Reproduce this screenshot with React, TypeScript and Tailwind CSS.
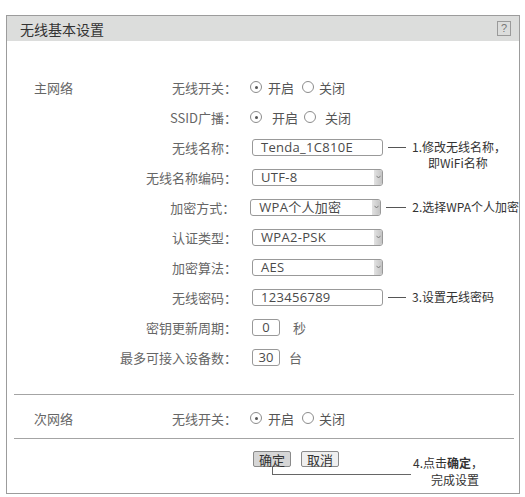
import React from "react";

const font = "font-['Noto_Sans_CJK_SC','Noto_Sans',sans-serif]";
const latin = "font-['Open_Sans','Noto_Sans_CJK_SC',sans-serif]";

function Radio({ checked }: { checked?: boolean }) {
  return (
    <span className="inline-flex w-[12px] h-[12px] rounded-full border border-[#8c8c8c] items-center justify-center bg-white shrink-0">
      {checked && <span className="w-[3px] h-[3px] rounded-full bg-[#555]" />}
    </span>
  );
}

function TextBox({ value }: { value: string }) {
  return (
    <div
      className={`w-[131px] h-[17px] border border-[#999] rounded-[3px] pl-[8px] flex items-center text-[13px] leading-none text-[#4a4a4a] tracking-[0.3px] ${latin}`}
    >
      {value}
    </div>
  );
}

function SelectBox({ value }: { value: string }) {
  return (
    <div
      className={`w-[131px] h-[17px] border border-[#999] rounded-[3px] pl-[8px] flex items-center justify-between text-[13px] leading-none text-[#4a4a4a] tracking-[0.3px] overflow-hidden ${latin}`}
    >
      <span>{value}</span>
      <span className="w-[8px] h-full bg-gradient-to-r from-[#e2e2e2] to-[#c4c4c4] flex items-center justify-center">
        <svg width="5" height="4" viewBox="0 0 5 4">
          <path d="M0.5 0.8 L2.5 3 L4.5 0.8" fill="none" stroke="#777" strokeWidth="0.9" />
        </svg>
      </span>
    </div>
  );
}

function SmallBox({ value }: { value: string }) {
  return (
    <div
      className={`w-[28px] h-[17px] border border-[#999] rounded-[3px] flex items-center justify-center text-[13px] leading-none text-[#4a4a4a] ${latin}`}
    >
      {value}
    </div>
  );
}

function Callout({ children, len = 18 }: { children: React.ReactNode; len?: number }) {
  return (
    <div className="flex items-center ml-[5px]">
      <span className="h-px bg-[#555]" style={{ width: len }} />
      <span className="ml-[6px] text-[12px] leading-none text-[#333] whitespace-nowrap relative">{children}</span>
    </div>
  );
}

function Row({
  section,
  label,
  children,
}: {
  section?: string;
  label: string;
  children: React.ReactNode;
}) {
  return (
    <div className="flex items-center h-[30px]">
      <div className="w-[100px] pl-[27px] text-[13px] leading-none text-[#666]">{section}</div>
      <div className="w-[130px] text-right text-[13px] leading-none text-[#666] whitespace-nowrap">{label}</div>
      <div className="pl-[15px] flex items-center">{children}</div>
    </div>
  );
}

function OnOff({ wide }: { wide?: boolean }) {
  return (
    <div className="flex items-center text-[13px] leading-none text-[#555] -ml-[2px]">
      <Radio checked />
      <span className={wide ? "ml-[10px]" : "ml-[6px]"}>开启</span>
      <span className={wide ? "ml-[6px]" : "ml-[8px]"}>
        <Radio />
      </span>
      <span className={wide ? "ml-[9px]" : "ml-[5px]"}>关闭</span>
    </div>
  );
}

export default function App() {
  return (
    <div className={`w-[525px] h-[497px] bg-white pt-[15px] pl-[6px] ${font}`}>
      <div className="w-[514px] h-[479px] border border-[#9c9c9c] flex flex-col">
        <div className="h-[25px] bg-[#dcdddc] flex items-center justify-between pl-[13px] pr-[8px]">
          <span className="text-[14px] leading-none text-[#333]">无线基本设置</span>
          <span className="w-[14px] h-[15px] border border-[#9a9a9a] flex items-center justify-center text-[11px] leading-none text-[#777] font-['Liberation_Sans',sans-serif]">
            ?
          </span>
        </div>

        <div className="pt-[31px] flex flex-col">
          <Row section="主网络" label="无线开关：">
            <OnOff />
          </Row>
          <Row label="SSID广播：">
            <OnOff wide />
          </Row>
          <Row label="无线名称：">
            <TextBox value="Tenda_1C810E" />
            <Callout>
              1.修改无线名称，
              <span className="absolute left-[16px] top-[16px]">即WiFi名称</span>
            </Callout>
          </Row>
          <Row label="无线名称编码：">
            <SelectBox value="UTF-8" />
          </Row>
          <Row label="加密方式：">
            <SelectBox value="WPA个人加密" />
            <Callout len={20}>2.选择WPA个人加密</Callout>
          </Row>
          <Row label="认证类型：">
            <SelectBox value="WPA2-PSK" />
          </Row>
          <Row label="加密算法：">
            <SelectBox value="AES" />
          </Row>
          <Row label="无线密码：">
            <TextBox value="123456789" />
            <Callout>3.设置无线密码</Callout>
          </Row>
          <Row label="密钥更新周期：">
            <SmallBox value="0" />
            <span className="ml-[13px] text-[13px] leading-none text-[#666]">秒</span>
          </Row>
          <Row label="最多可接入设备数：">
            <SmallBox value="30" />
            <span className="ml-[9px] text-[13px] leading-none text-[#666]">台</span>
          </Row>

          <div className="mt-[22px] ml-[7px] mr-[5px] h-px bg-[#a4a4a4]" />
          <div className="mt-[8px]">
            <Row section="次网络" label="无线开关：">
              <OnOff />
            </Row>
          </div>
          <div className="mt-[5px] ml-[7px] mr-[5px] h-px bg-[#a4a4a4]" />

          <div className="relative pt-[12px] pl-[246px] flex items-start gap-[10px]">
            <div className="relative">
              <button className="h-[16px] px-[5px] border border-[#8a8a8a] rounded-[2px] bg-[#d6d6d6] text-[13px] leading-none text-[#333] flex items-center">
                确定
              </button>
              <span className="absolute left-1/2 top-full w-[139px] h-[8px] border-l border-b border-[#666]" />
            </div>
            <button className="h-[16px] px-[5px] border border-[#8a8a8a] rounded-[2px] bg-[#efefef] text-[13px] leading-none text-[#333] flex items-center">
              取消
            </button>
            <div className="absolute left-[406px] top-[18px] text-[12px] leading-none text-[#333] whitespace-nowrap">
              <div>
                4.点击<span className="font-bold">确定</span>，
              </div>
              <div className="mt-[5px] pl-[18px]">完成设置</div>
            </div>
          </div>
        </div>
      </div>
    </div>
  );
}
